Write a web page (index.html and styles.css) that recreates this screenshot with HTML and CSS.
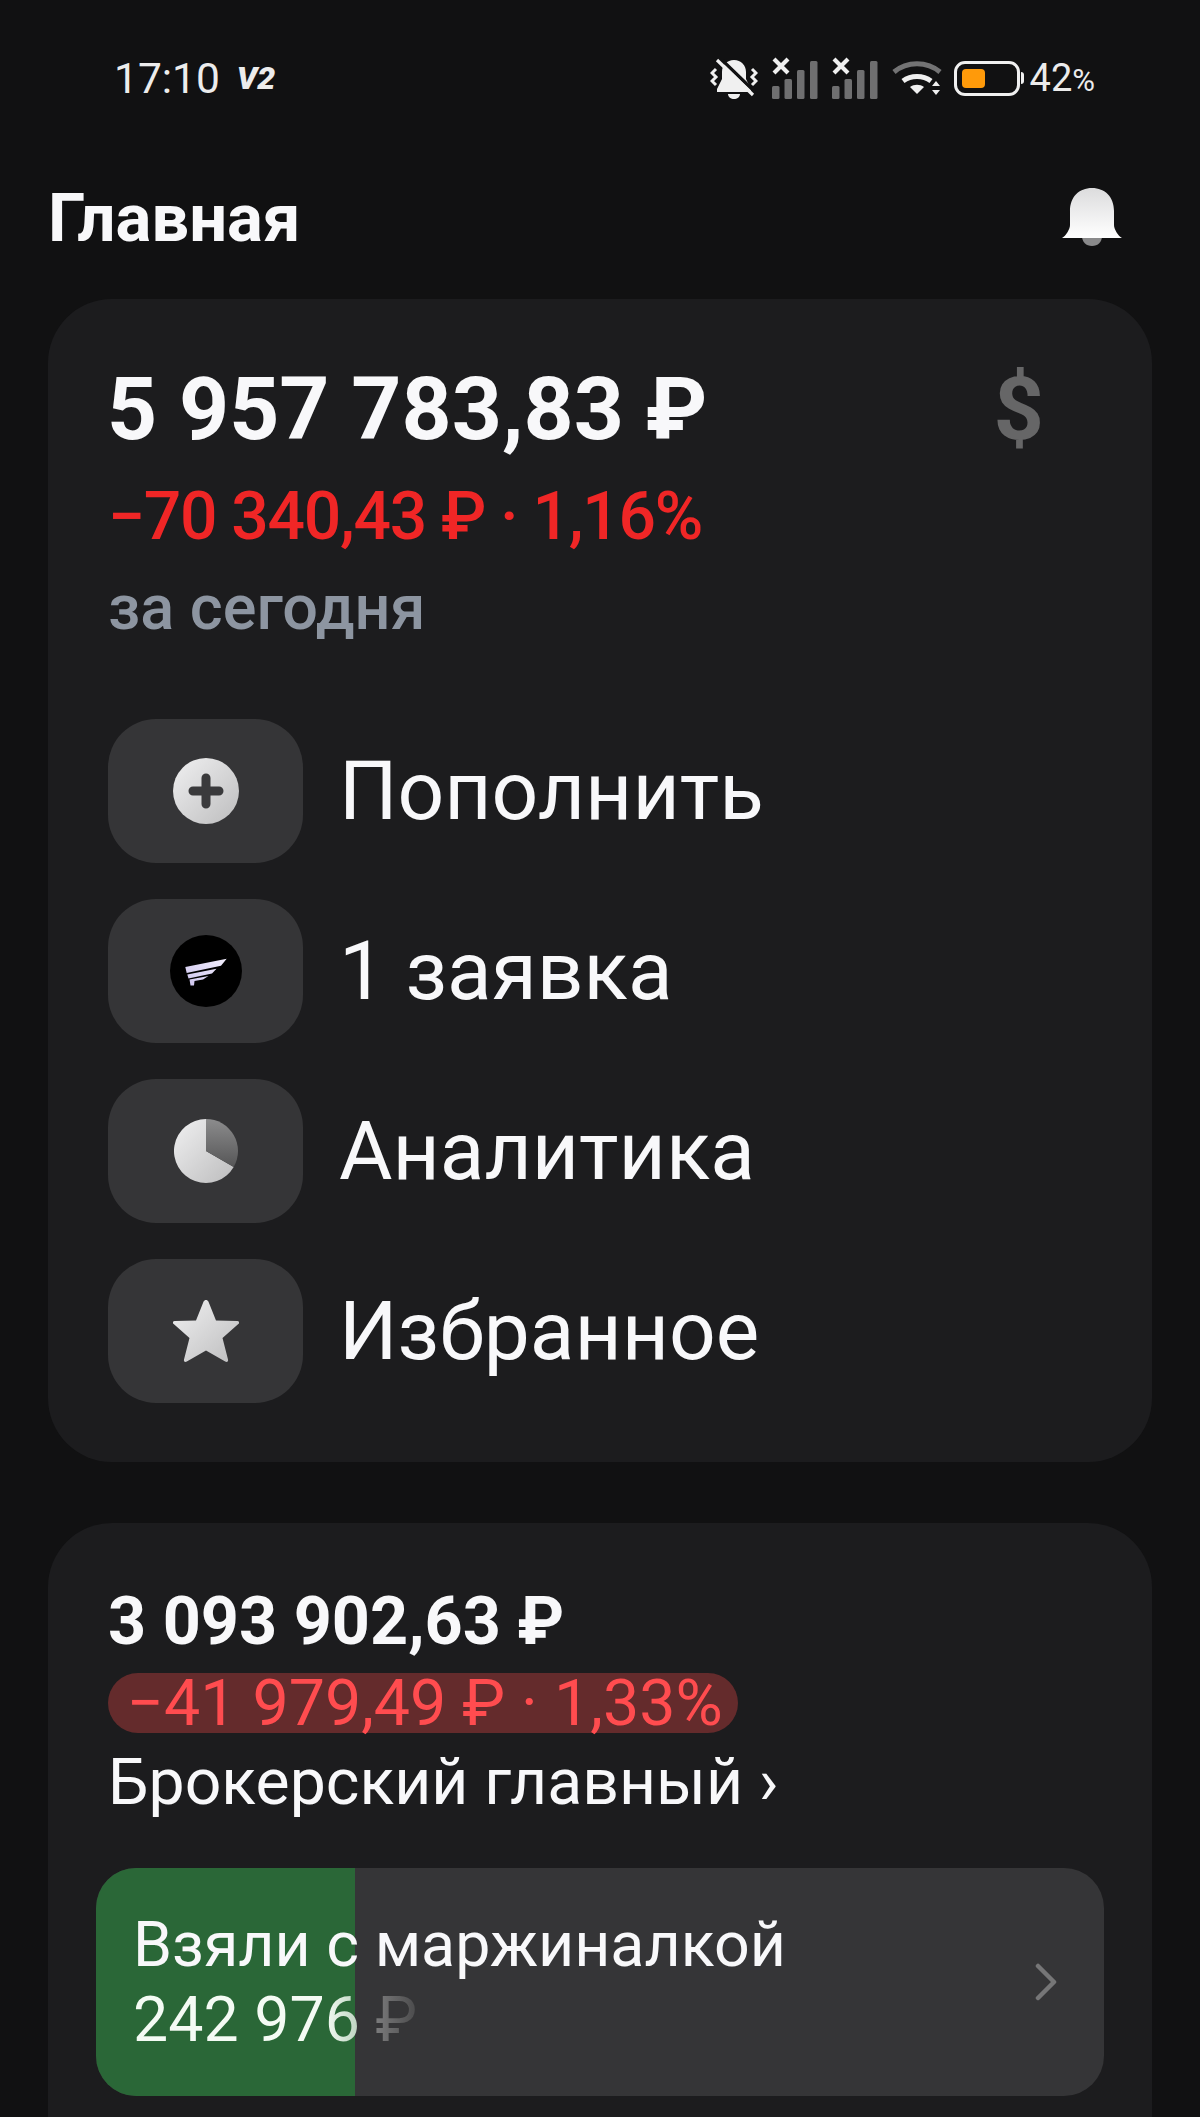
FILE: index.html
```html
<!DOCTYPE html>
<html lang="ru">

<head>
  <meta charset="UTF-8">
  <meta name="viewport" content="width=device-width, initial-scale=1.0">
  <title>Главная</title>

  <link rel="stylesheet" href="styles.css">
</head>

<body>
  <svg class="defs" width="0" height="0">
    <defs>
      <linearGradient id="metal" x1="0" y1="0" x2="1" y2="1">
        <stop offset="0" stop-color="#f0f0f1" />
        <stop offset="1" stop-color="#bdbdbe" />
      </linearGradient>
      <linearGradient id="bell" x1="0" y1="0" x2="0" y2="1">
        <stop offset="0" stop-color="#dcdcdd" />
        <stop offset="1" stop-color="#ffffff" />
      </linearGradient>
      <linearGradient id="slice" x1="0" y1="0" x2="0" y2="1">
        <stop offset="0" stop-color="#8c8c8d" />
        <stop offset="1" stop-color="#565657" />
      </linearGradient>
      <linearGradient id="wing" x1="0" y1="1" x2="1" y2="0">
        <stop offset="0" stop-color="#cdc4ee" />
        <stop offset="1" stop-color="#f2eefc" />
      </linearGradient>
    </defs>
  </svg>

  <header class="status-bar">
    <div class="status-left">
      <span class="time">17:10</span>
      <span class="volte">V2</span>
    </div>
    <div class="status-right">
      <svg class="ic-mute" viewBox="0 0 48 42" width="48" height="42">
        <path fill="#f0f0f0" d="M24 3c7 0 12 5 12 12v7l5 10v3H7v-3l5-10v-7c0-7 5-12 12-12z" />
        <path fill="#f0f0f0" d="M18 37h12c0 3-3 5-6 5s-6-2-6-5z" />
        <path stroke="#111112" stroke-width="3.200" d="M10 1l35 34" />
        <path stroke="#f0f0f0" stroke-width="3.200" d="M7 3l36 35" />
        <path stroke="#f0f0f0" stroke-width="3" fill="none" d="M6 12l-4 4 4 4-4 4 4 4M42 12l4 4-4 4 4 4-4 4" />
      </svg>
      <svg class="ic-signal" viewBox="0 0 46 42" width="46" height="42">
        <path stroke="#f0f0f0" stroke-width="4.200" d="M2 2l14 14M16 2L2 16" />
        <g fill="#6f6f70">
          <rect x="0" y="29" width="7.500" height="13" rx="1.500" />
          <rect x="12.500" y="22" width="7.500" height="20" rx="1.500" />
          <rect x="25" y="13" width="7.500" height="29" rx="1.500" />
          <rect x="38" y="4" width="7.500" height="38" rx="1.500" />
        </g>
      </svg>
      <svg class="ic-signal" viewBox="0 0 46 42" width="46" height="42">
        <path stroke="#f0f0f0" stroke-width="4.200" d="M2 2l14 14M16 2L2 16" />
        <g fill="#6f6f70">
          <rect x="0" y="29" width="7.500" height="13" rx="1.500" />
          <rect x="12.500" y="22" width="7.500" height="20" rx="1.500" />
          <rect x="25" y="13" width="7.500" height="29" rx="1.500" />
          <rect x="38" y="4" width="7.500" height="38" rx="1.500" />
        </g>
      </svg>
      <svg class="ic-wifi" viewBox="0 0 50 36" width="50" height="36">
        <path fill="none" stroke="#737374" stroke-width="5" d="M2 12c13-11 33-11 46 0" />
        <path fill="none" stroke="#f0f0f0" stroke-width="5" d="M11 21c8-6 20-6 28 0" />
        <path fill="#f0f0f0" d="M18 27c4-3 10-3 14 0l-7 7z" />
        <path fill="#f0f0f0" d="M44 21l4 5h-8zM44 35l4-5h-8z" />
      </svg>
      <div class="battery">
        <div class="battery-fill"></div>
      </div>
      <span class="percent">42<small>%</small></span>
    </div>
  </header>

  <div class="title-row">
    <h1>Главная</h1>
    <svg class="ic-bell" viewBox="0 0 60 60" width="60" height="60">
      <path fill="#8a8a8b" d="M20 48h20c0 6-4 10-10 10s-10-4-10-10z" />
      <path fill="url(#bell)" d="M30 0c13 0 22 9 22 23v14c0 4 4 11 8 13H0c4-2 8-9 8-13V23C8 9 17 0 30 0z" />
    </svg>
  </div>

  <main>
    <section class="card card-total">
      <div class="total-top">
        <div class="total-sum">5 957 783,83 ₽</div>
        <div class="currency">$</div>
      </div>
      <div class="total-change">−70 340,43 ₽ · 1,16%</div>
      <div class="total-period">за сегодня</div>

      <ul class="actions">
        <li class="action">
          <div class="tile">
            <svg viewBox="0 0 66 66" width="66" height="66">
              <circle cx="33" cy="33" r="33" fill="url(#metal)" />
              <path stroke="#3a3a3c" stroke-width="9" stroke-linecap="round" d="M33 20v26M20 33h26" />
            </svg>
          </div>
          <span>Пополнить</span>
        </li>
        <li class="action">
          <div class="tile">
            <svg viewBox="0 0 72 72" width="72" height="72">
              <circle cx="36" cy="36" r="36" fill="#000" />
              <path fill="url(#wing)" d="M15.300 32L56.700 23.700 51 30.700 16.700 38zM17.300 39.500L46.500 33.700 42 38.500 18.500 43.500zM19.500 44.500L38.500 41 33 44.500 24.500 46 24 50.500H20.500z" />
            </svg>
          </div>
          <span>1 заявка</span>
        </li>
        <li class="action">
          <div class="tile">
            <svg viewBox="0 0 64 64" width="64" height="64">
              <path fill="url(#metal)" d="M32 0v32l27.700 16A32 32 0 1 1 32 0z" />
              <path fill="url(#slice)" d="M32 0a32 32 0 0 1 27.700 48L32 32z" />
            </svg>
          </div>
          <span>Аналитика</span>
        </li>
        <li class="action">
          <div class="tile">
            <svg viewBox="0 0 66 62" width="66" height="62">
              <path fill="url(#metal)" d="M33 0c1 0 2 .6 2.400 1.600L43 20.500l21.300.6c2 .1 2.400 1.700 1 3L49.500 38 55 59.500c.5 2-1 3-2.800 2L33 50.500 13.800 61.500c-1.800 1-3.300 0-2.800-2L16.500 38 .7 24.100c-1.400-1.300-1-2.900 1-3l21.300-.6 7.600-18.900C31 .6 32 0 33 0z" />
            </svg>
          </div>
          <span>Избранное</span>
        </li>
      </ul>
    </section>

    <section class="card card-account">
      <div class="account-sum">3 093 902,63 ₽</div>
      <div class="account-change">−41 979,49 ₽ · 1,33%</div>
      <div class="account-name">Брокерский главный ›</div>

      <div class="margin-tile">
        <div class="margin-bar" style="width: 259px"></div>
        <div class="margin-text">
          <div>Взяли с маржиналкой</div>
          <div><span class="margin-sum">242 976 ₽</span></div>
        </div>
        <svg class="ic-chevron" viewBox="0 0 24 38" width="24" height="38">
          <path fill="none" stroke="#767677" stroke-width="4.500" stroke-linecap="round" stroke-linejoin="round" d="M4 3l16 16L4 35" />
        </svg>
      </div>
    </section>
  </main>
</body>

</html>
```

FILE: styles.css
```css
* {
  box-sizing: border-box;
}

html,
body {
  margin: 0;
  height: 2117px;
  overflow: hidden;
}

body {
  background: #111112;
  color: #f8f8fa;
  font-family: Roboto, "Liberation Sans", sans-serif;
}

.defs {
  display: block;
  height: 0;
}

.status-bar {
  align-items: center;
  display: flex;
  height: 156px;
  justify-content: space-between;
  padding: 0 105px 0 114px;
}

.status-left,
.status-right {
  align-items: center;
  display: flex;
}

.status-left {
  gap: 17px;
}

.status-right {
  margin-left: auto;
}

.time {
  color: #ececec;
  font-size: 42.500px;
}

.volte {
  color: #ececec;
  font-size: 32px;
  font-style: italic;
  font-weight: 900;
}

.ic-mute {
  margin-right: 14px;
}

.ic-signal {
  margin-right: 14px;
}

.ic-wifi {
  margin-right: 12px;
}

.battery {
  border: 3px solid #f0f0f0;
  border-radius: 11px;
  height: 35px;
  padding: 5px;
  position: relative;
  width: 66px;
}

.battery::after {
  background: #f0f0f0;
  border-radius: 0 3px 3px 0;
  content: "";
  height: 12px;
  position: absolute;
  right: -7px;
  top: 8px;
  width: 3px;
}

.battery-fill {
  background: #ff9a0a;
  border-radius: 4px;
  height: 100%;
  width: 23px;
}

.percent {
  color: #ececec;
  font-size: 38px;
  margin-left: 10px;
}

.percent small {
  font-size: 31px;
}

.title-row {
  align-items: center;
  display: flex;
  height: 143px;
  justify-content: space-between;
  padding: 0 78px 20px 48px;
}

h1 {
  font-size: 67px;
  font-weight: 700;
  margin: 0;
}

main {
  display: flex;
  flex-direction: column;
  gap: 61px;
  padding: 0 48px;
}

.card {
  background: #1c1c1e;
  border-radius: 64px;
}

.card-total {
  height: 1163px;
  padding: 61px 60px 0;
}

.total-top {
  align-items: center;
  display: flex;
  justify-content: space-between;
  padding-right: 48px;
}

.total-sum {
  font-size: 87.500px;
  font-weight: 700;
  line-height: 98px;
  margin-left: -1px;
}

.currency {
  color: #666667;
  font-size: 88px;
  font-weight: 700;
  line-height: 98px;
}

.total-change {
  color: #f02626;
  font-size: 66px;
  font-weight: 500;
  letter-spacing: -1.300px;
  line-height: 74px;
  margin-top: 22px;
}

.total-period {
  color: #8d95a1;
  font-size: 63px;
  font-weight: 500;
  line-height: 70px;
  margin-top: 19px;
}

.actions {
  display: flex;
  flex-direction: column;
  gap: 36px;
  list-style: none;
  margin: 76px 0 0;
  padding: 0;
}

.action {
  align-items: center;
  display: flex;
  font-size: 82px;
  gap: 36px;
}

.tile {
  align-items: center;
  background: #353537;
  border-radius: 48px;
  display: flex;
  height: 144px;
  justify-content: center;
  width: 195px;
}

.card-account {
  border-radius: 64px 64px 0 0;
  height: 594px;
  padding: 61px 48px 0;
}

.account-sum {
  font-size: 66.500px;
  font-weight: 700;
  line-height: 74px;
  padding-left: 12px;
}

.account-change {
  background: #642b2c;
  border-radius: 30px;
  color: #ff4c4f;
  font-size: 64.500px;
  height: 60px;
  line-height: 60px;
  margin: 15px 0 0 12px;
  padding: 0 19px;
  white-space: nowrap;
  width: 630px;
}

.account-name {
  font-size: 64.300px;
  line-height: 70px;
  margin-top: 14px;
  padding-left: 12px;
}

.margin-tile {
  align-items: center;
  background: #353537;
  border-radius: 40px;
  display: flex;
  height: 228px;
  justify-content: space-between;
  margin-top: 51px;
  overflow: hidden;
  padding: 0 46px 0 37px;
  position: relative;
}

.margin-bar {
  background: #2a6737;
  bottom: 0;
  left: 0;
  position: absolute;
  top: 0;
}

.margin-text {
  font-size: 62.700px;
  line-height: 75px;
  position: relative;
}

.margin-sum {
  background: linear-gradient(90deg, #f4fbf4 0, #f4fbf4 192px, #c3d8c6 222px, #7c7c7d 242px, #4f4f50 280px);
  -webkit-background-clip: text;
  background-clip: text;
  color: transparent;
}

.ic-chevron {
  position: relative;
}
```
